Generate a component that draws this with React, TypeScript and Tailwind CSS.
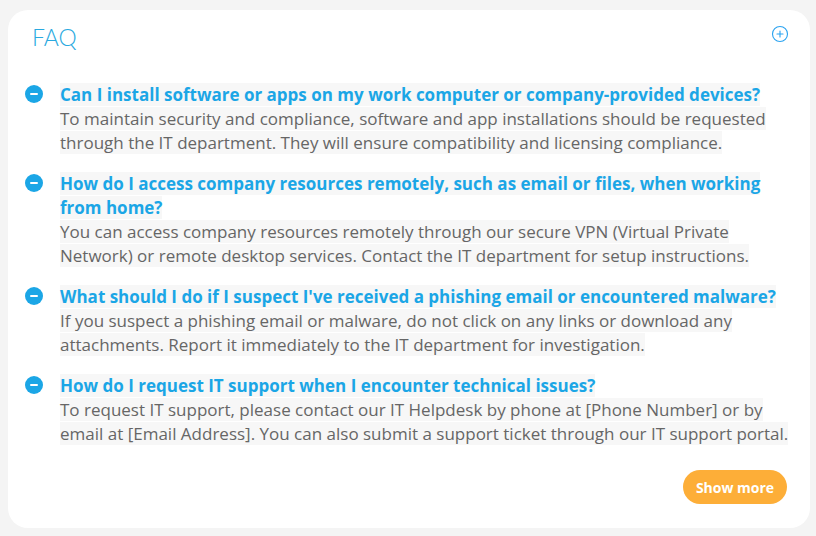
import { CirclePlus } from 'lucide-react';

const faqs = [
  {
    q: 'Can I install software or apps on my work computer or company-provided devices?',
    a: 'To maintain security and compliance, software and app installations should be requested through the IT department. They will ensure compatibility and licensing compliance.',
  },
  {
    q: 'How do I access company resources remotely, such as email or files, when working from home?',
    a: 'You can access company resources remotely through our secure VPN (Virtual Private Network) or remote desktop services. Contact the IT department for setup instructions.',
  },
  {
    q: "What should I do if I suspect I've received a phishing email or encountered malware?",
    a: 'If you suspect a phishing email or malware, do not click on any links or download any attachments. Report it immediately to the IT department for investigation.',
  },
  {
    q: 'How do I request IT support when I encounter technical issues?',
    a: 'To request IT support, please contact our IT Helpdesk by phone at [Phone Number] or by email at [Email Address]. You can also submit a support ticket through our IT support portal.',
  },
];

const MinusDot = () => (
  <div className="w-[18px] h-[18px] rounded-full bg-[#1ba6e6] flex items-center justify-center shrink-0 mt-[2px]">
    <div className="w-[8px] h-[2px] bg-white rounded" />
  </div>
);

export default function App() {
  return (
    <div className="w-[816px] h-[536px] bg-[#f4f4f4] pt-[10px] pl-[8px]" style={{ fontFamily: '"Open Sans", sans-serif' }}>
      <div className="w-[802px] h-[518px] bg-white rounded-[20px] flex flex-col pl-[17px] pr-[12px]">
        <div className="flex items-start justify-between pt-[12px] pl-[7px] pr-[11px]">
          <h1 className="text-[23px] font-light text-[#29a9e0] leading-[30px]" style={{ fontFamily: 'Lato, sans-serif' }}>FAQ</h1>
          <CirclePlus size={18} strokeWidth={1.5} className="text-[#2ba3f0] mt-[3px] -mr-[2px]" />
        </div>
        <div className="flex flex-col gap-[17px] mt-[31px]">
          {faqs.map((f) => (
            <div key={f.q} className="flex gap-[17px]">
              <MinusDot />
              <p className="text-[17px] leading-[24px]">
                <span className="bg-[#f7f7f7] font-bold text-[#1ba6e6]">{f.q}</span>
                <br />
                <span className="bg-[#f7f7f7] text-[#666]">{f.a}</span>
              </p>
            </div>
          ))}
        </div>
        <div className="flex justify-end mt-auto mb-[24px] pr-[11px]">
          <button className="bg-[#fdae38] text-white text-[14px] font-bold rounded-full w-[104px] h-[34px]">Show more</button>
        </div>
      </div>
    </div>
  );
}
